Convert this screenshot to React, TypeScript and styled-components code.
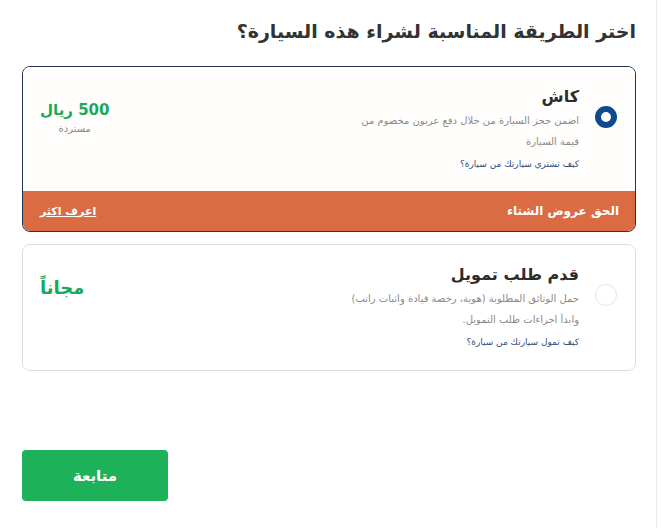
import React from 'react';
import styled, { createGlobalStyle } from 'styled-components';

const GlobalStyle = createGlobalStyle`
    body {
        margin: 0;
        background: #ffffff;
        font-family: "DejaVu Sans", "Noto Sans", sans-serif;
    }
`;

const Page = styled.div`
    direction: rtl;
    width: 662px;
    height: 528px;
    box-sizing: border-box;
    padding: 18px 26px 0 22px;
    position: relative;

    &::after {
        content: '';
        position: absolute;
        top: 0;
        bottom: 0;
        right: 5px;
        width: 1px;
        background: #ececec;
    }
`;

const Title = styled.h2`
    margin: 0 0 22px;
    font-size: 19px;
    font-weight: bold;
    color: #333333;
    line-height: 26px;
`;

const Card = styled.div<{ $active?: boolean }>`
    border: 1px solid ${({ $active }) => ($active ? '#1f3550' : '#dcdcdc')};
    border-radius: 8px;
    overflow: hidden;
    margin-bottom: 12px;
    background: #fff;
`;

const CardBody = styled.div<{ $active?: boolean }>`
    display: flex;
    align-items: flex-start;
    padding: 20px 18px 0 17px;
    height: ${({ $active }) => ($active ? '124px' : '125px')};
    box-sizing: border-box;
    background: ${({ $active }) => ($active ? '#fffefc' : '#fff')};
`;

const Radio = styled.span<{ $checked?: boolean }>`
    flex: none;
    width: 22px;
    height: 22px;
    box-sizing: border-box;
    border-radius: 50%;
    margin-top: 19px;
    margin-left: 16px;
    border: ${({ $checked }) => ($checked ? '6px solid #0d4b8e' : '1px solid #e6e6e6')};
    background: #fff;
`;

const Info = styled.div`
    flex: 1;
`;

const OptionName = styled.div`
    font-size: 16px;
    font-weight: bold;
    color: #2c2c2c;
    line-height: 20px;
`;

const Desc = styled.p`
    margin: 3px 0 0;
    font-size: 10px;
    color: #8a8a8a;
    line-height: 21px;
`;

const HowLink = styled.a`
    display: block;
    margin-top: 4px;
    font-size: 9px;
    color: #2e4d7c;
    line-height: 16px;
    text-decoration: none;
`;

const Price = styled.div`
    flex: none;
    text-align: center;
    margin-top: 12px;
`;

const Amount = styled.div<{ $big?: boolean }>`
    font-size: ${({ $big }) => ($big ? '18px' : '15px')};
    font-weight: bold;
    color: #1aa95a;
    line-height: 22px;
    direction: rtl;
`;

const Note = styled.div`
    font-size: 10px;
    color: #8a8a8a;
    line-height: 16px;
`;

const OfferBar = styled.div`
    display: flex;
    align-items: center;
    justify-content: space-between;
    height: 40px;
    padding: 0 16px 0 17px;
    background: #da6b43;
    color: #ffffff;
    font-size: 12px;
    font-weight: bold;
`;

const MoreLink = styled.a`
    color: #ffffff;
    font-size: 11px;
    font-weight: bold;
    text-decoration: underline;
`;

const Actions = styled.div`
    display: flex;
    justify-content: flex-end;
    margin-top: 79px;
`;

const ContinueButton = styled.button`
    width: 146px;
    height: 51px;
    border: none;
    border-radius: 4px;
    background: #1db25a;
    color: #ffffff;
    font-family: inherit;
    font-size: 15px;
    font-weight: bold;
    cursor: pointer;
`;

const App: React.FC = () => {
    return (
        <Page>
            <GlobalStyle />
            <Title>اختر الطريقة المناسبة لشراء هذه السيارة؟</Title>

            <Card $active>
                <CardBody $active>
                    <Radio $checked />
                    <Info>
                        <OptionName>كاش</OptionName>
                        <Desc>
                            اضمن حجز السيارة من خلال دفع عربون مخصوم من
                            <br />
                            قيمة السيارة
                        </Desc>
                        <HowLink href="#">كيف تشتري سيارتك من سيارة؟</HowLink>
                    </Info>
                    <Price>
                        <Amount>500 ريال</Amount>
                        <Note>مستردة</Note>
                    </Price>
                </CardBody>
                <OfferBar>
                    <span>الحق عروض الشتاء</span>
                    <MoreLink href="#">اعرف اكثر</MoreLink>
                </OfferBar>
            </Card>

            <Card>
                <CardBody>
                    <Radio />
                    <Info>
                        <OptionName>قدم طلب تمويل</OptionName>
                        <Desc>
                            حمل الوثائق المطلوبة (هوية، رخصة قيادة واثبات راتب)
                            <br />
                            وابدأ اجراءات طلب التمويل.
                        </Desc>
                        <HowLink href="#">كيف تمول سيارتك من سيارة؟</HowLink>
                    </Info>
                    <Price>
                        <Amount $big>مجاناً</Amount>
                    </Price>
                </CardBody>
            </Card>

            <Actions>
                <ContinueButton>متابعة</ContinueButton>
            </Actions>
        </Page>
    );
};

export default App;
